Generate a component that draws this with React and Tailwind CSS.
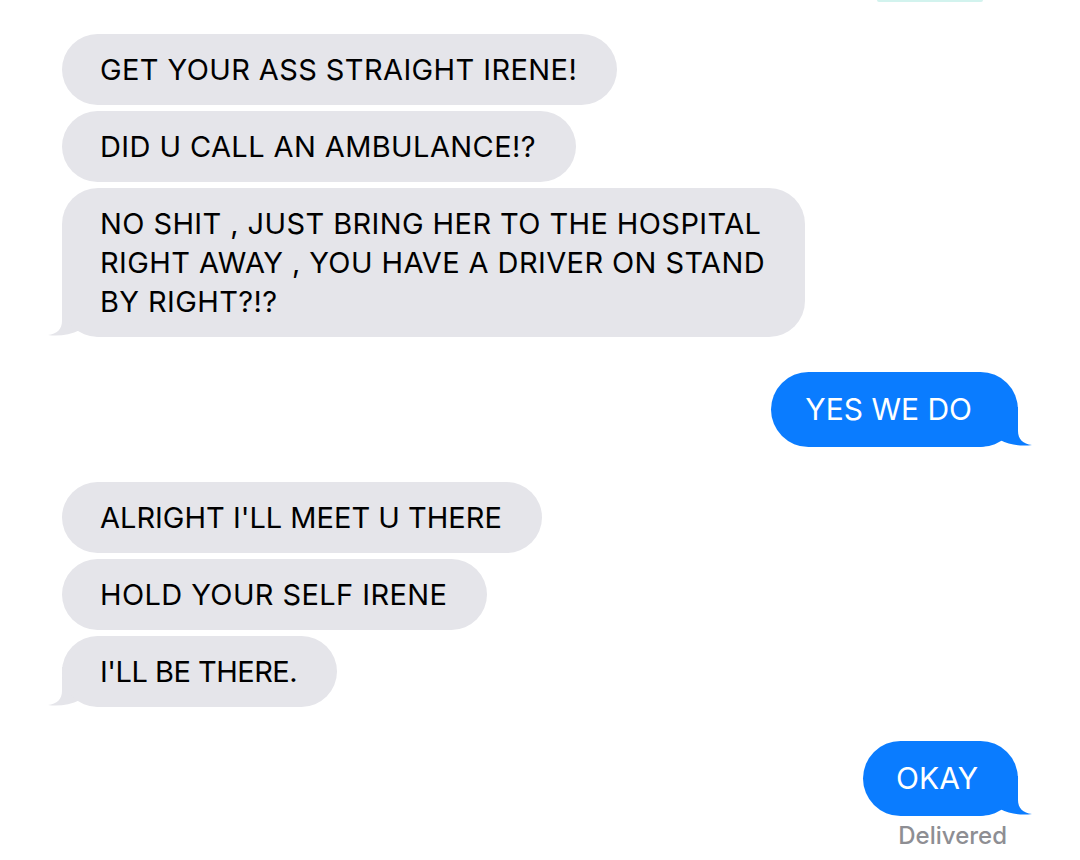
import React from "react";

const GRAY = "#e5e5ea";
const BLUE = "#0a7cff";

function LeftTail() {
  return (
    <svg
      className="absolute left-[-14px] bottom-0"
      width="60"
      height="40"
      viewBox="0 0 60 40"
    >
      <path
        d="M14,0 L14,24 C14,32 9,37 0,38 C10,39.5 22,38 32,33 C38,37 46,40 56,40 L60,40 L60,0 Z"
        fill={GRAY}
      />
    </svg>
  );
}

function RightTail() {
  return (
    <svg
      className="absolute right-[-14px] bottom-0"
      width="60"
      height="40"
      viewBox="0 0 60 40"
    >
      <path
        d="M46,0 L46,24 C46,32 51,37 60,38 C50,39.5 38,38 28,33 C22,37 14,40 4,40 L0,40 L0,0 Z"
        fill={BLUE}
      />
    </svg>
  );
}

function Gray({ children, tail, track = "tracking-[0.4px]" }) {
  return (
    <div className="relative">
      {tail && <LeftTail />}
      <div
        className={
          "relative rounded-[36px] bg-[#e5e5ea] pl-[38px] pr-[40px] py-4 text-[29px] leading-[39px] text-black " +
          track
        }
      >
        {children}
      </div>
    </div>
  );
}

function Blue({ children, cls }) {
  return (
    <div className="relative self-end">
      <RightTail />
      <div
        className={
          "relative rounded-[38px] bg-[#0a7cff] text-[30px] leading-[39px] text-white " +
          cls
        }
      >
        {children}
      </div>
    </div>
  );
}

export default function App() {
  return (
    <div
      className="relative w-[1080px] h-[860px] overflow-hidden bg-white"
      style={{ fontFamily: "Inter, 'Liberation Sans', sans-serif" }}
    >
      <div className="absolute top-0 left-[877px] h-[2px] w-[106px] rounded-b bg-[#d2f3ee]" />
      <div className="flex flex-col px-[62px] pt-[34px]">
        <div className="flex flex-col items-start gap-[6px]">
          <Gray>GET YOUR ASS STRAIGHT IRENE!</Gray>
          <Gray>DID U CALL AN AMBULANCE!?</Gray>
          <Gray tail>
            NO SHIT , JUST BRING HER TO THE HOSPITAL
            <br />
            RIGHT AWAY , YOU HAVE A DRIVER ON STAND
            <br />
            BY RIGHT?!?
          </Gray>
        </div>

        <div className="mt-[35px] flex flex-col">
          <Blue cls="pl-[34px] pr-[46px] py-[18px]">YES WE DO</Blue>
        </div>

        <div className="mt-[35px] flex flex-col items-start gap-[6px]">
          <Gray track="tracking-[0px]">ALRIGHT I'LL MEET U THERE</Gray>
          <Gray>HOLD YOUR SELF IRENE</Gray>
          <Gray tail track="tracking-[-0.5px]">
            I'LL BE THERE.
          </Gray>
        </div>

        <div className="mt-[34px] flex flex-col">
          <Blue cls="pl-[33px] pr-[40px] py-[18px]">OKAY</Blue>
          <div className="self-end mr-[11px] mt-[6px] text-[24px] leading-[28px] font-medium text-[#8e8e93]">
            Delivered
          </div>
        </div>
      </div>
    </div>
  );
}
